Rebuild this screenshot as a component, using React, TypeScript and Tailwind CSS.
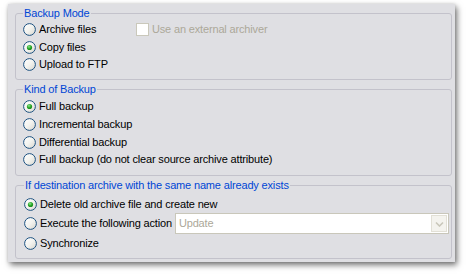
import React from "react";

const font = { fontFamily: '"Liberation Sans", Arial, sans-serif' };

function Radio({ checked }: { checked?: boolean }) {
  return (
    <svg width="13" height="13" viewBox="0 0 13 13" className="shrink-0">
      <defs>
        <linearGradient id="rg" x1="0" y1="0" x2="1" y2="1">
          <stop offset="0" stopColor="#ffffff" />
          <stop offset="0.5" stopColor="#f3f3ef" />
          <stop offset="1" stopColor="#d6d5cd" />
        </linearGradient>
        <radialGradient id="dot" cx="0.4" cy="0.35" r="0.7">
          <stop offset="0" stopColor="#8ee58e" />
          <stop offset="0.6" stopColor="#21a121" />
          <stop offset="1" stopColor="#1a8a1a" />
        </radialGradient>
      </defs>
      <circle cx="6.5" cy="6.5" r="5.9" fill="url(#rg)" stroke="#1c5180" strokeWidth="1" />
      {checked && <circle cx="6.5" cy="6.5" r="2.6" fill="url(#dot)" />}
    </svg>
  );
}

function Row({ checked, label, h }: { checked?: boolean; label: string; h: string }) {
  return (
    <div className={`flex items-center ${h}`}>
      <Radio checked={checked} />
      <span className="ml-[3px] text-[11px] leading-[13px] text-black whitespace-nowrap">{label}</span>
    </div>
  );
}

export default function App() {
  return (
    <div className="w-[470px] h-[277px] bg-white overflow-hidden tracking-[-0.16px]" style={font}>
      <div className="ml-[8px] mt-[4px] w-[447px] h-[258px] bg-[#dfdfe3] shadow-[2px_3px_6px_rgba(0,0,0,0.55),0_0_3px_rgba(0,0,0,0.12)] pl-[7px] pr-[3px] pt-[3px] flex flex-col">
        {/* Backup Mode */}
        <fieldset className="h-[73px] border border-[#c3c2cb] rounded-[3px] pl-[7px] pr-0">
          <legend className="px-[1px] text-[11px] leading-[13px] text-[#0046d5]">Backup Mode</legend>
          <div className="pt-[1px] flex flex-col">
            <div className="flex items-center h-[17.5px]">
              <div className="w-[113px] flex items-center">
                <Radio />
                <span className="ml-[3px] text-[11px] leading-[13px] text-black whitespace-nowrap">Archive files</span>
              </div>
              <div className="w-[13px] h-[13px] bg-white border border-[#cac8bb] shrink-0" />
              <span className="ml-[3px] text-[11px] leading-[13px] text-[#aca899] whitespace-nowrap">Use an external archiver</span>
            </div>
            <Row checked label="Copy files" h="h-[17.5px]" />
            <Row label="Upload to FTP" h="h-[17.5px]" />
          </div>
        </fieldset>

        {/* Kind of Backup */}
        <fieldset className="mt-[3px] h-[93px] border border-[#c3c2cb] rounded-[3px] pl-[7px] pr-0">
          <legend className="px-[1px] text-[11px] leading-[13px] text-[#0046d5]">Kind of Backup</legend>
          <div className="pt-[2px] flex flex-col">
            <Row checked label="Full backup" h="h-[17.67px]" />
            <Row label="Incremental backup" h="h-[17.67px]" />
            <Row label="Differential backup" h="h-[17.67px]" />
            <Row label="Full backup (do not clear source archive attribute)" h="h-[17.67px]" />
          </div>
        </fieldset>

        {/* If destination exists */}
        <fieldset className="mt-[3px] h-[80px] border border-[#c3c2cb] rounded-[3px] pl-[8px] pr-0">
          <legend className="px-[1px] text-[11px] leading-[13px] text-[#0046d5]">
            If destination archive with the same name already exists
          </legend>
          <div className="pt-[3px] flex flex-col">
            <Row checked label="Delete old archive file and create new" h="h-[18px]" />
            <div className="flex items-center h-[21px]">
              <Radio />
              <span className="ml-[3px] text-[11px] leading-[13px] text-black whitespace-nowrap">Execute the following action</span>
              <div className="ml-[3px] flex-1 mr-[2px] h-[21px] bg-white border border-[#c9c7ba] flex items-center">
                <span className="pl-[3px] flex-1 text-[11px] leading-[13px] text-[#aca899]">Update</span>
                <div className="w-[16px] h-[17px] mr-[1px] bg-[#f4f3ee] border border-[#e2e0d6] flex items-center justify-center">
                  <svg width="9" height="6" viewBox="0 0 9 6">
                    <path d="M1 1.5 L4.5 5 L8 1.5" fill="none" stroke="#c9c7ba" strokeWidth="1.6" />
                  </svg>
                </div>
              </div>
            </div>
            <Row label="Synchronize" h="h-[18px]" />
          </div>
        </fieldset>
      </div>
    </div>
  );
}
